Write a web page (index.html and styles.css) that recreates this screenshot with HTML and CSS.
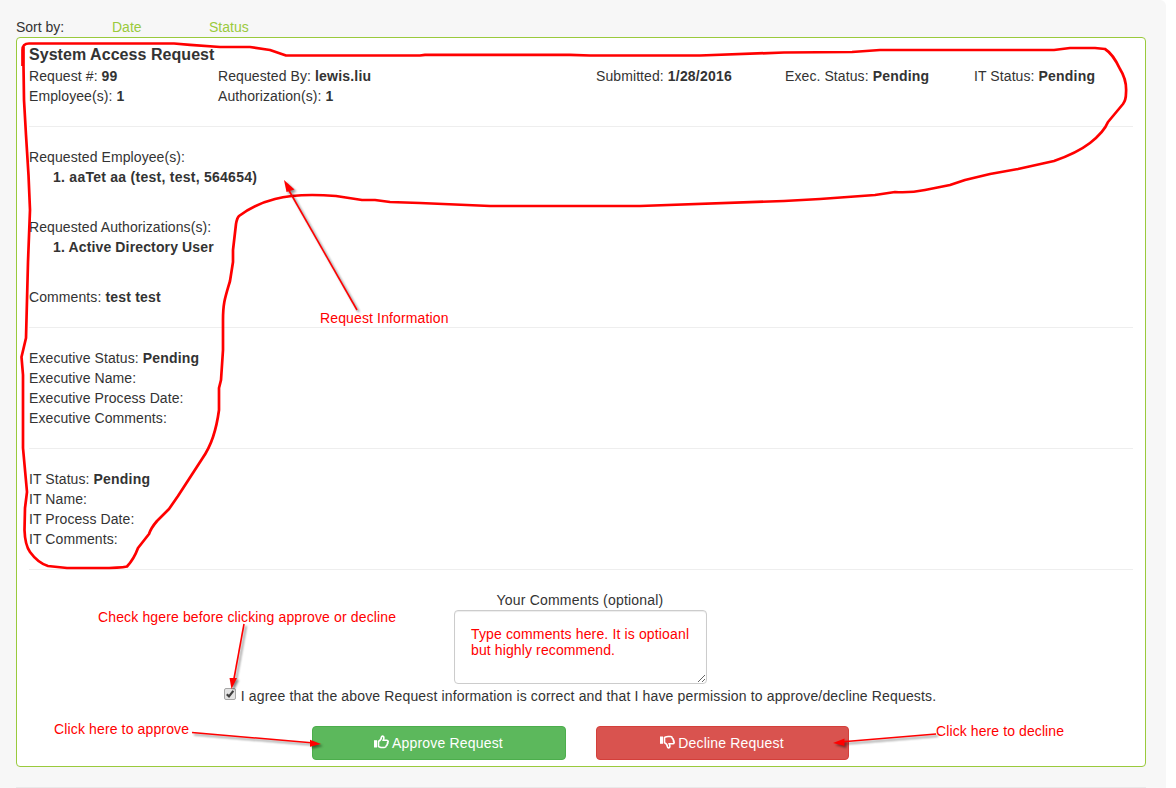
FILE: index.html
```html
<!DOCTYPE html>
<html lang="en">
<head>
<meta charset="utf-8">
<title>System Access Request</title>
<link rel="stylesheet" href="styles.css">
</head>
<body>
<main class="panel">
  <nav class="sort"><span class="sort-label">Sort by:</span><a class="sort-date">Date</a><a>Status</a></nav>
  <article class="card">
    <h1 class="title">System Access Request</h1>
    <div class="summary">
      <div>Request #: <b>99</b></div>
      <div class="wide">Requested By: <b>lewis.liu</b></div>
      <div>Submitted: <b>1/28/2016</b></div>
      <div>Exec. Status: <b>Pending</b></div>
      <div>IT Status: <b>Pending</b></div>
      <div>Employee(s): <b>1</b></div>
      <div class="wide">Authorization(s): <b>1</b></div>
    </div>
    <hr>
    <section class="details">
      <div>Requested Employee(s):<div class="item employee">1. aaTet aa (test, test, 564654)</div></div>
      <div>Requested Authorizations(s):<div class="item">1. Active Directory User</div></div>
      <div>Comments: <b>test test</b></div>
    </section>
    <hr>
    <section>
      <div>Executive Status: <b>Pending</b></div>
      <div>Executive Name:</div>
      <div>Executive Process Date:</div>
      <div>Executive Comments:</div>
    </section>
    <hr>
    <section>
      <div>IT Status: <b>Pending</b></div>
      <div>IT Name:</div>
      <div>IT Process Date:</div>
      <div>IT Comments:</div>
    </section>
    <hr>
    <form class="decision">
      <label class="comment-label" for="comments">Your Comments (optional)</label>
      <textarea id="comments" class="comments"></textarea>
      <label class="agree">
        <svg class="check" width="12" height="12" viewBox="0 0 12 12"><rect x=".5" y=".5" width="11" height="11" rx="1.5" fill="#e4e4e4" stroke="#a6a6a6"/><path d="M2.8 6.2 5 8.4 9.3 2.8" fill="none" stroke="#404040" stroke-width="2.2"/></svg>
        <span class="agree-text">I agree that the above Request information is correct and that I have permission to approve/decline Requests.</span>
      </label>
      <div class="actions">
        <button type="button" class="btn approve"><svg class="thumb" width="15" height="14" viewBox="0 0 15 14"><path d="M0 5.2h3v7.300H0z" fill="#fff"/><path d="M4.500 11.500V6.300C6.200 5.800 7.300 3.800 7.500 2.200 7.600.7 9.900.6 9.900 2.700c0 1-.5 1.800-.7 2.600h3.600c1.600 0 1.700 1.700.8 2.100.5.8.1 1.600-.5 1.800.2.800-.2 1.400-.8 1.600-.1 1.200-.9 1.700-2 1.700H8c-1.500 0-2.400-.7-3.500-1z" fill="none" stroke="#fff" stroke-width="1.600"/></svg><span>Approve Request</span></button>
        <button type="button" class="btn decline"><svg class="thumb down" width="15" height="14" viewBox="0 0 15 14"><path d="M0 5.200h3v7.300H0z" fill="#fff"/><path d="M4.500 11.500V6.300C6.200 5.800 7.300 3.800 7.500 2.200 7.600.7 9.900.6 9.900 2.700c0 1-.5 1.800-.7 2.600h3.600c1.600 0 1.700 1.700.8 2.100.5.8.1 1.600-.5 1.800.2.800-.2 1.400-.8 1.600-.1 1.200-.9 1.700-2 1.700H8c-1.500 0-2.400-.7-3.500-1z" fill="none" stroke="#fff" stroke-width="1.600"/></svg><span>Decline Request</span></button>
      </div>
    </form>
  </article>
  <div class="next-card"></div>
</main>
<svg class="notes" width="1176" height="788" viewBox="0 0 1176 788">
  <path class="outline" d="M22.500 66V50Q22.500 43.500 29 43.500H174L190 44.800 220 47H250L270 50 286 55.500H420L425 54.800H570L590 55.500H700L784 52.500 852 52 880 50H1054L1070 48H1095L1105 49Q1113 54 1120 69 1127 80 1126 93 1126 100 1123 104L1108 122Q1104 132 1090 143 1077 153 1054 161L1018 169 990 174 965 180 950 185 925 190Q910 193 895 192L875 195 820 199 784 201 640 206H490L420 203 390 202 375 200H362L336 196C310 194 290 195 275 199Q255 204 239 216 237 218 236 224L233 250 233 262 230 281C225 298 223 303 223 320V350L221 380 219 388V410Q217 425 213 437 209 449 202 459L178 496 169 509 157 521Q151 528 149 534L138 548Q134 559 127 566.500 120 568 100 568H67L48 566Q38 563 30 552 25 545 24.500 530L25 508 27 492 25 470 23 448V375L21.500 357 26 338 28 262 30 210 28.500 175 26 135 24 100 23.500 66V46"/>
  <g class="arrows">
    <path d="M357 310 287 187"/><path class="head" d="M284 180 294.500 189.500 286.500 192z"/>
    <path d="M244 624 233 684"/><path class="head" d="M231.500 689 229.500 678 237 678z"/>
    <path d="M192 732.500 314 743"/><path class="head" d="M321 744 310 739.800V746.800z"/>
    <path d="M936 734 840 742"/><path class="head" d="M833 743 844.500 738.500V746z"/>
  </g>
  <g class="captions">
    <text x="320" y="323" textLength="128.500">Request Information</text>
    <text x="98" y="622" textLength="298">Check hgere before clicking approve or decline</text>
    <text x="471" y="639" textLength="218">Type comments here. It is optioanl</text>
    <text x="471" y="655" textLength="144">but highly recommend.</text>
    <text x="54" y="734" textLength="135">Click here to approve</text>
    <text x="936" y="736" textLength="128">Click here to decline</text>
  </g>
</svg>
</body>
</html>
```
FILE: styles.css
```css
* { box-sizing: border-box; }
body {
  margin: 0;
  height: 788px;
  overflow: hidden;
  background: #fff;
  color: #333;
  font: 14px/20px "Liberation Sans", Arial, sans-serif;
}
b { letter-spacing: .2px; }
.panel {
  width: 1166px;
  height: 788px;
  padding: 17px 20px 0 16px;
  background: #f7f7f7;
  border-radius: 0 6px 0 0;
}
.sort { display: flex; height: 20px; color: #9aca3c; }
.sort-label { width: 96px; color: #333; }
.sort-date { width: 97px; }
.card {
  height: 730px;
  padding: 5px 12px 0;
  background: #fff;
  border: 1px solid #9aca3c;
  border-radius: 4px;
  letter-spacing: .09px;
}
.title { margin: 0; font-size: 16px; line-height: 23px; letter-spacing: .05px; }
.summary { display: grid; grid-template-columns: repeat(6, 189px); margin-right: -30px; }
.wide { grid-column: span 2; }
hr { height: 1px; margin: 20px 0; border: 0; background: #eee; }
.details { display: flex; flex-direction: column; gap: 30px; }
.item { padding-left: 24px; font-weight: bold; letter-spacing: .14px; }
.employee { letter-spacing: .26px; }
.decision { display: flex; flex-direction: column; align-items: center; padding-right: 2px; }
.comment-label { letter-spacing: .2px; }
.comments {
  width: 253px;
  height: 74px;
  margin: 0;
  background: #fff;
  border: 1px solid #ccc;
  border-radius: 4px;
  box-shadow: inset 0 1px 1px rgba(0, 0, 0, .075);
}
.agree { display: flex; align-items: flex-start; gap: 5px; margin-top: 2px; white-space: nowrap; letter-spacing: .147px; }
.check { margin-top: 2px; }
.actions { display: flex; gap: 30px; margin-top: 20px; }
.btn {
  display: flex;
  align-items: center;
  justify-content: center;
  gap: 3px;
  width: 254px;
  height: 34px;
  padding: 0;
  border: 1px solid #4cae4c;
  border-radius: 4px;
  background: #5cb85c;
  color: #fff;
  font: inherit;
  letter-spacing: .18px;
}
.decline { width: 253px; border-color: #d43f3a; background: #d9534f; }
.thumb { margin-top: -3px; }
.down { transform: scaleY(-1); }
.next-card { height: 1px; margin-top: 20px; background: #e9e9e9; }
.notes { position: absolute; top: 0; left: 0; pointer-events: none; }
.outline { fill: none; stroke: #f00; stroke-width: 2.7; stroke-linejoin: round; }
.arrows { fill: none; stroke: #f00; stroke-width: 1.6; filter: drop-shadow(2px 2px 1px rgba(0, 0, 0, .45)); }
.head { fill: #f00; stroke: none; }
.captions { fill: #f00; font-size: 14px; }
```
